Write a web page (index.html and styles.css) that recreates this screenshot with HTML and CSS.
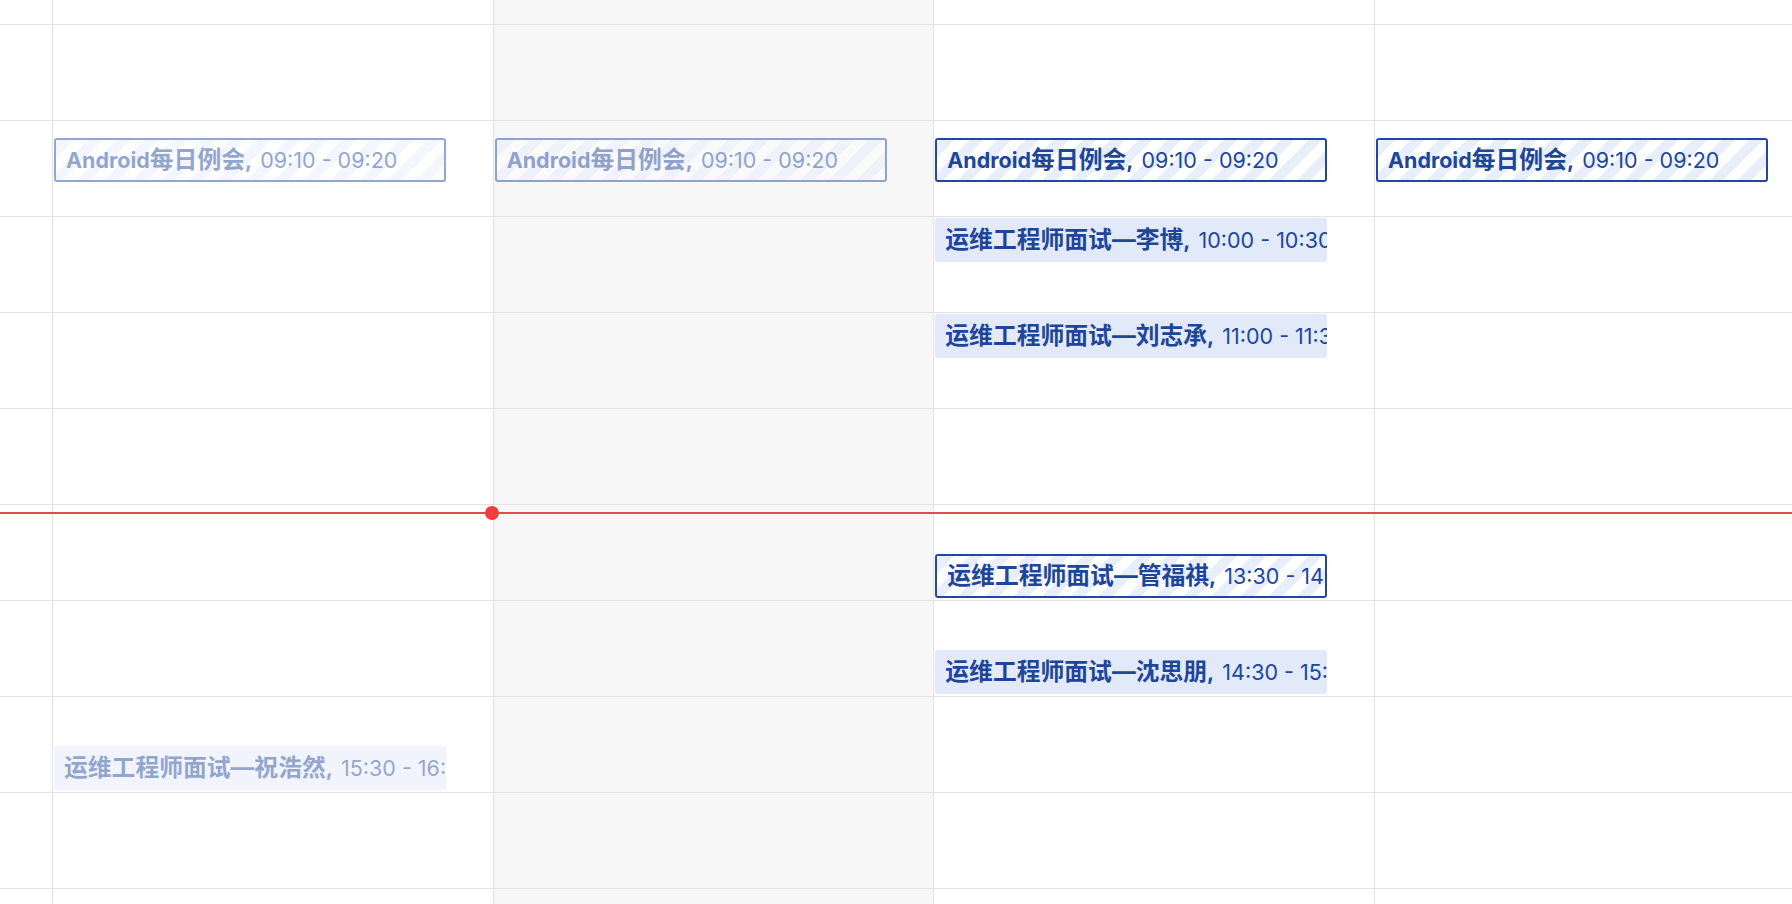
FILE: index.html
```html
<!DOCTYPE html>
<html lang="zh-CN">
<head>
<meta charset="utf-8">
<title>Week</title>
<link rel="stylesheet" href="styles.css">
</head>
<body>
<div class="timegrid">
  <div class="day edge">
    <div class="slot first"></div><div class="slot"></div><div class="slot"></div><div class="slot"></div><div class="slot"></div><div class="slot"></div><div class="slot"></div><div class="slot"></div><div class="slot"></div><div class="slot"></div>
  </div>
  <div class="day past">
    <div class="slot first"></div><div class="slot"></div><div class="slot"></div><div class="slot"></div><div class="slot"></div><div class="slot"></div><div class="slot"></div><div class="slot"></div><div class="slot"></div><div class="slot"></div>
    <div class="event outlined" style="top:138px"><b>Android<span class="han">每日例会</span>,</b> 09:10 - 09:20</div>
    <div class="event filled" style="top:746px"><b><span class="han">运维工程师面试—祝浩然</span>,</b> 15:30 - 16:00</div>
  </div>
  <div class="day past today">
    <div class="slot first"></div><div class="slot"></div><div class="slot"></div><div class="slot"></div><div class="slot"></div><div class="slot"></div><div class="slot"></div><div class="slot"></div><div class="slot"></div><div class="slot"></div>
    <div class="event outlined" style="top:138px"><b>Android<span class="han">每日例会</span>,</b> 09:10 - 09:20</div>
  </div>
  <div class="day">
    <div class="slot first"></div><div class="slot"></div><div class="slot"></div><div class="slot"></div><div class="slot"></div><div class="slot"></div><div class="slot"></div><div class="slot"></div><div class="slot"></div><div class="slot"></div>
    <div class="event outlined" style="top:138px"><b>Android<span class="han">每日例会</span>,</b> 09:10 - 09:20</div>
    <div class="event filled" style="top:218px"><b><span class="han">运维工程师面试—李博</span>,</b> 10:00 - 10:30</div>
    <div class="event filled" style="top:314px"><b><span class="han">运维工程师面试—刘志承</span>,</b> 11:00 - 11:30</div>
    <div class="event outlined" style="top:554px"><b><span class="han">运维工程师面试—管福祺</span>,</b> 13:30 - 14:00</div>
    <div class="event filled" style="top:650px"><b><span class="han">运维工程师面试—沈思朋</span>,</b> 14:30 - 15:00</div>
  </div>
  <div class="day">
    <div class="slot first"></div><div class="slot"></div><div class="slot"></div><div class="slot"></div><div class="slot"></div><div class="slot"></div><div class="slot"></div><div class="slot"></div><div class="slot"></div><div class="slot"></div>
    <div class="event outlined" style="top:138px"><b>Android<span class="han">每日例会</span>,</b> 09:10 - 09:20</div>
  </div>
  <div class="now-line"><span class="now-dot"></span></div>
</div>
</body>
</html>
```

FILE: styles.css
```css
html, body {
  margin: 0;
  padding: 0;
  background: #ffffff;
  height: 904px;
  overflow: hidden;
}

.timegrid {
  position: relative;
  display: grid;
  grid-template-columns: 52px repeat(4, 440.67px);
  height: 904px;
  overflow: hidden;
  font-family: Inter, "Noto Sans CJK SC", sans-serif;
}

.day {
  position: relative;
  display: flex;
  flex-direction: column;
  border-left: 1px solid #e3e3e5;
}

.day.edge {
  border-left: none;
}

.day.today {
  background: #f7f7f8;
}

.slot {
  flex: 0 0 96px;
  box-sizing: border-box;
  border-bottom: 1px solid #e3e3e5;
}

.slot.first {
  flex-basis: 25px;
}

.event {
  position: absolute;
  left: 1px;
  width: 392px;
  height: 44px;
  box-sizing: border-box;
  padding: 0 10px;
  display: flex;
  align-items: center;
  white-space: pre;
  overflow: hidden;
  font-size: 21.5px;
  line-height: 30px;
  color: #1d4699;
  border-radius: 3px;
}

.event b {
  font-weight: 700;
  margin-right: 2px;
}

.event .han {
  font-family: Inter, "Noto Sans CJK SC", sans-serif;
  font-size: 23.8px;
}

.event.outlined {
  border: 2px solid #1f47a3;
  padding-left: 10px;
  background: repeating-linear-gradient(-45deg, #ffffff 0 10px, #e8eefa 10px 20px);
}

.event.filled {
  background: #e2eafa;
  border-radius: 2px;
}

.past .event {
  opacity: 0.48;
}

.now-line {
  position: absolute;
  left: 0;
  right: 0;
  top: 512px;
  height: 2px;
  background: #e24c4c;
}

.now-dot {
  position: absolute;
  left: 485px;
  top: -6px;
  width: 14px;
  height: 14px;
  border-radius: 50%;
  background: #f03e3e;
}
```
